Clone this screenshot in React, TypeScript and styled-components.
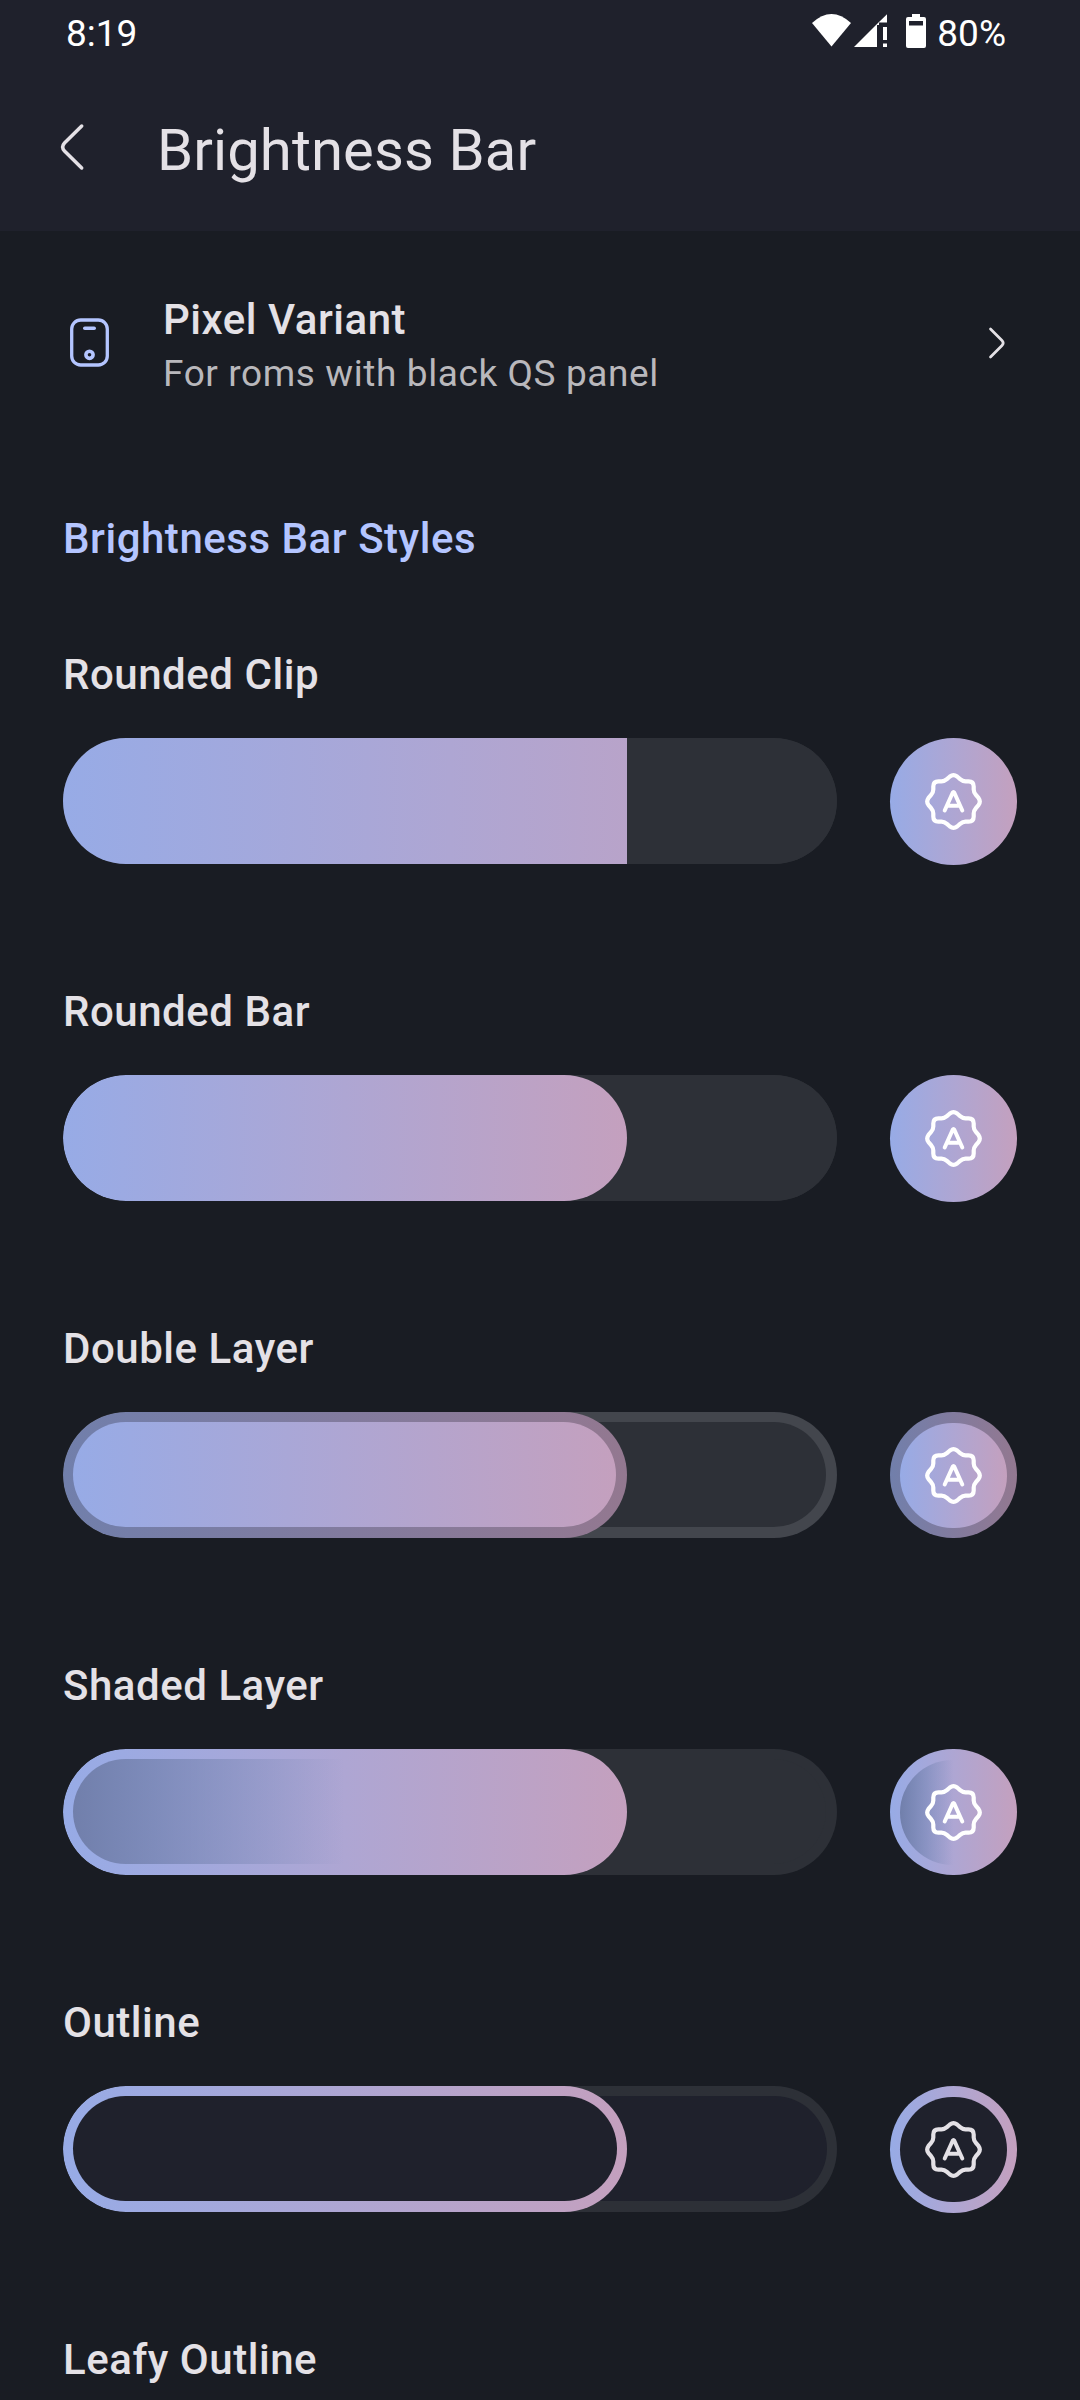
import React from "react";
import styled, { createGlobalStyle } from "styled-components";

const Global = createGlobalStyle`
  * { box-sizing: border-box; }
  html, body { margin: 0; padding: 0; background: #191c23; }
  body { font-family: Roboto, sans-serif; color: #e4e1e6; }
  svg { display: block; }
`;

const gradient = "linear-gradient(90deg, #97abe6 0%, #aea6d3 50%, #c4a0be 100%)";
const dimGradient = "linear-gradient(90deg, #717fab 0%, #827b9e 50%, #937890 100%)";

type Variant = "clip" | "rounded" | "double" | "shaded" | "outline";

const fillInsets: Record<Variant, string> = {
  clip: "0",
  rounded: "0",
  double: "10px 11px 11px 10px",
  shaded: "10px 11px 11px 10px",
  outline: "10px 10px 11px 10px",
};

const Screen = styled.main`
  width: 1080px;
  height: 2400px;
  overflow: hidden;
  background: #191c23;
`;

const Header = styled.header`
  height: 231px;
  background: #1f212c;
`;

const StatusBar = styled.div`
  display: flex;
  justify-content: space-between;
  height: 66px;
  padding: 0 74px 0 66px;
  color: #fff;
  font-size: 37px;
  line-height: 68px;
`;

const StatusIcons = styled.div`
  display: flex;
  align-items: flex-start;
`;

const Toolbar = styled.div`
  display: flex;
  align-items: center;
  height: 165px;
  padding: 0 56px;
`;

const BackIcon = styled.svg`
  margin-top: -4px;
`;

const Title = styled.h1`
  margin: 0 0 0 71px;
  padding-top: 2px;
  font-size: 58px;
  font-weight: 400;
  line-height: 70px;
  letter-spacing: 0.1px;
`;

const VariantLink = styled.section`
  display: flex;
  align-items: center;
  height: 222px;
  padding: 2px 72px 0 68px;
`;

const LinkTexts = styled.div`
  flex: 1;
  padding: 6px 0 0 53px;
`;

const LinkTitle = styled.div`
  font-size: 42px;
  font-weight: 500;
  line-height: 54px;
  letter-spacing: 0.53px;
`;

const LinkSummary = styled.div`
  font-size: 37px;
  line-height: 53px;
  letter-spacing: 0.6px;
  color: #b9b8bc;
`;

const Heading = styled.h2`
  margin: 0;
  padding: 61px 63px 0;
  height: 169px;
  font-size: 42px;
  font-weight: 500;
  line-height: 50px;
  letter-spacing: 0.53px;
  color: #b4c5ff;
`;

const Item = styled.section`
  height: 337px;
  padding: 28px 63px 0;
`;

const ItemName = styled.h3`
  margin: 0 0 38px;
  font-size: 42px;
  font-weight: 500;
  line-height: 50px;
  letter-spacing: 0.53px;
`;

const Controls = styled.div`
  display: flex;
  align-items: flex-start;
  gap: 53px;
`;

const Track = styled.div<{ $variant: Variant }>`
  display: grid;
  width: 774px;
  height: 126px;
  border-radius: 63px;
  overflow: hidden;
  background: ${({ $variant }) => ($variant === "double" ? "#43464d" : "#2d3037")};
`;

const TrackCore = styled.div<{ $variant: Variant }>`
  grid-area: 1 / 1;
  margin: ${({ $variant }) => fillInsets[$variant]};
  border-radius: 63px;
  background: ${({ $variant }) => ($variant === "outline" ? "#1f212c" : "#2d3037")};
`;

const Fill = styled.div<{ $variant: Variant }>`
  grid-area: 1 / 1;
  width: 564px;
  height: 126px;
  padding: ${({ $variant }) => fillInsets[$variant]};
  border-radius: ${({ $variant }) => ($variant === "clip" ? 0 : "63px")};
  background: ${({ $variant }) => ($variant === "double" ? dimGradient : gradient)};
  background-size: ${({ $variant }) => ($variant === "clip" ? "774px 126px" : "100% 100%")};
`;

const Button = styled.div<{ $variant: Variant }>`
  display: flex;
  align-items: flex-start;
  justify-content: center;
  width: 127px;
  height: ${({ $variant }) => ($variant === "double" || $variant === "shaded" ? 126 : 127)}px;
  padding-top: 11px;
  border-radius: 64px;
  background: ${({ $variant }) => ($variant === "double" ? dimGradient : gradient)};
`;

const Inner = styled.div<{ $variant: Variant }>`
  width: 100%;
  height: 100%;
  border-radius: 64px;
  background: ${({ $variant }) =>
    $variant === "double"
      ? gradient
      : $variant === "shaded"
        ? "linear-gradient(90deg, #717fab 0%, rgba(174, 166, 211, 0) 50%)"
        : $variant === "outline"
          ? "#1f212c"
          : "none"};
`;

const ButtonInner = styled(Inner)`
  display: grid;
  place-items: center;
  width: 107px;
  height: 105px;
`;

const AutoIcon = ({ color }: { color: string }) => (
  <svg
    width="57"
    height="57"
    viewBox="-28.5 -28.5 57 57"
    fill="none"
    stroke={color}
    strokeLinecap="round"
    strokeLinejoin="round"
  >
    <path
      strokeWidth="4.200"
      d="M-6.6-22.4L-3.6-25Q0-27.600 3.6-25L6.6-22.4Q9.2-20.2 12-20.2H15Q20.2-20.2 20.2-15V-12Q20.2-9.2 22.4-6.6L25-3.6Q27.600 0 25 3.6L22.4 6.6Q20.2 9.2 20.2 12V15Q20.2 20.2 15 20.2H12Q9.2 20.2 6.6 22.4L3.6 25Q0 27.600-3.6 25L-6.6 22.4Q-9.2 20.2-12 20.2H-15Q-20.2 20.2-20.2 15V12Q-20.2 9.2-22.4 6.6L-25 3.6Q-27.600 0-25-3.6L-22.4-6.6Q-20.2-9.2-20.2-12V-15Q-20.2-20.2-15-20.2H-12Q-9.2-20.2-6.6-22.4Z"
    />
    <path strokeWidth="4" d="M-8.8 9L-0.700-9Q0-10.200 0.700-9L8.8 9M-5.8 4.300H5.8" />
  </svg>
);

const items: { name: string; variant: Variant }[] = [
  { name: "Rounded Clip", variant: "clip" },
  { name: "Rounded Bar", variant: "rounded" },
  { name: "Double Layer", variant: "double" },
  { name: "Shaded Layer", variant: "shaded" },
  { name: "Outline", variant: "outline" },
];

export default function App() {
  return (
    <>
      <Global />
      <Screen>
        <Header>
          <StatusBar>
            <span>8:19</span>
            <StatusIcons>
              <svg width="125" height="66" viewBox="812 0 125 66" fill="#fff">
                <path d="M812 23Q831.500 5 851 23L831.500 46.500Z" />
                <path d="M854 47L879 22V25H877V47ZM879 22L887 14.300V22.500H879ZM883 27H887V40H883ZM883 43.500H887V47H883Z" />
                <path
                  fillRule="evenodd"
                  d="M912 14H920V17H924Q926 17 926 19V46Q926 48 924 48H908Q906 48 906 46V19Q906 17 908 17H912ZM909 21V25.500H923V21Z"
                />
              </svg>
              <span>80%</span>
            </StatusIcons>
          </StatusBar>
          <Toolbar>
            <BackIcon
              width="30"
              height="54"
              viewBox="0 0 30 54"
              fill="none"
              stroke="#e4e1e6"
              strokeWidth="3.500"
              strokeLinecap="round"
            >
              <path d="M25.700 6L8.500 23Q4.800 27 8.500 31L25.700 48" />
            </BackIcon>
            <Title>Brightness Bar</Title>
          </Toolbar>
        </Header>
        <VariantLink>
          <svg width="42" height="50" viewBox="0 0 42 50" fill="none" stroke="#b4c5ff" strokeWidth="3.300">
            <rect x="3.700" y="2" width="35.600" height="45" rx="9" />
            <path d="M16.800 10.200H26.200" strokeLinecap="round" strokeWidth="3.600" />
            <circle cx="21.500" cy="36.800" r="3.600" strokeWidth="3.600" />
          </svg>
          <LinkTexts>
            <LinkTitle>Pixel Variant</LinkTitle>
            <LinkSummary>For roms with black QS panel</LinkSummary>
          </LinkTexts>
          <svg width="20" height="34" viewBox="0 0 20 34" fill="none" stroke="#e4e1e6" strokeWidth="2.700" strokeLinecap="round">
            <path d="M2.500 3L14 14.500Q16.500 17 14 19.500L2.500 31" />
          </svg>
        </VariantLink>
        <Heading>Brightness Bar Styles</Heading>
        {items.map(({ name, variant }) => (
          <Item key={name}>
            <ItemName>{name}</ItemName>
            <Controls>
              <Track $variant={variant}>
                <TrackCore $variant={variant} />
                <Fill $variant={variant}>
                  <Inner $variant={variant} />
                </Fill>
              </Track>
              <Button $variant={variant}>
                <ButtonInner $variant={variant}>
                  <AutoIcon color={variant === "outline" ? "#e4e1e6" : "#fff"} />
                </ButtonInner>
              </Button>
            </Controls>
          </Item>
        ))}
        <Item>
          <ItemName>Leafy Outline</ItemName>
        </Item>
      </Screen>
    </>
  );
}
